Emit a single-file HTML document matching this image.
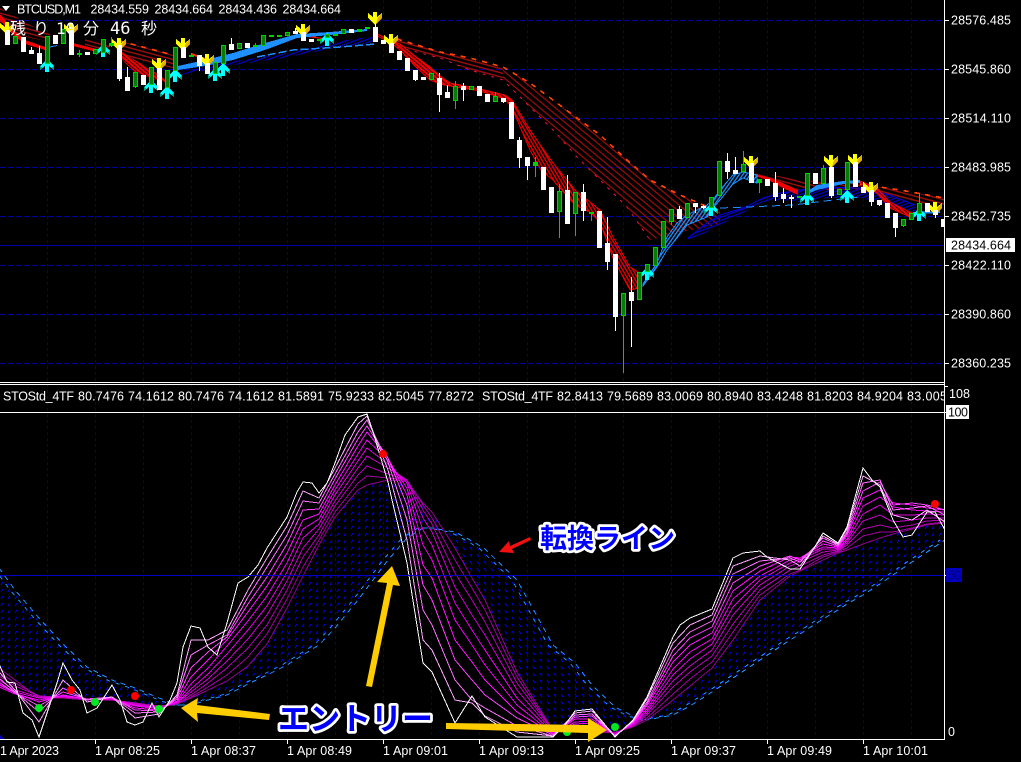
<!DOCTYPE html>
<html><head><meta charset="utf-8"><style>
html,body{margin:0;padding:0;background:#000;width:1021px;height:762px;overflow:hidden}
svg{display:block;position:absolute;left:0;top:0}
text{font-family:"Liberation Sans","DejaVu Sans",sans-serif;font-size:12.5px;fill:#fff}
.jp{font-family:"Liberation Sans","Noto Sans CJK JP",sans-serif;font-weight:700;fill:#0000ff;stroke:#fff;stroke-width:5.5px;stroke-linejoin:round;paint-order:stroke fill}
.t{font-family:"Liberation Sans","Noto Sans CJK JP",sans-serif;font-size:16px;fill:#fff}
.m{font-family:"DejaVu Sans Mono","Liberation Mono",monospace;font-size:16px;fill:#fff}
polyline{fill:none}
</style></head><body>
<svg width="1021" height="762" viewBox="0 0 1021 762" xmlns="http://www.w3.org/2000/svg">
<defs>
<clipPath id="a"><rect x="0" y="0" width="944" height="382"/></clipPath>
<clipPath id="b"><rect x="0" y="413" width="944" height="326"/></clipPath>
<clipPath id="l"><rect x="0" y="385" width="944" height="27"/></clipPath>
<g id="yd"><polygon points="-2,0 2,0 2,5 7,1 7,6 0,13 -7,6 -7,1 -2,5" fill="#ffff00"/><polygon points="3,5 7,1 7,6 1,12" fill="#e0b000"/></g>
<g id="cu"><polygon points="0,0 7,7 7,11 2,7 2,13 -2,13 -2,7 -7,11 -7,7" fill="#00ffff"/><polygon points="7,7 7,11 4,9" fill="#00a080"/><polygon points="-7,7 -7,11 -4,9" fill="#00a080"/></g>
<pattern id="sr15" width="10" height="4" patternUnits="userSpaceOnUse" patternTransform="rotate(15)"><rect width="10" height="1.4" fill="#a00c0c"/></pattern>
<pattern id="sr40" width="10" height="5" patternUnits="userSpaceOnUse" patternTransform="rotate(40)"><rect width="10" height="1.2" fill="#a00c0c"/></pattern>
<pattern id="fr40" width="10" height="3" patternUnits="userSpaceOnUse" patternTransform="rotate(40)"><rect width="10" height="2.2" fill="#f00000"/></pattern>
<pattern id="fr60" width="10" height="3" patternUnits="userSpaceOnUse" patternTransform="rotate(60)"><rect width="10" height="1.4" fill="#e80000"/></pattern>
<pattern id="fb60" width="10" height="3" patternUnits="userSpaceOnUse" patternTransform="rotate(-55)"><rect width="10" height="1.3" fill="#1e90ff"/></pattern>
<pattern id="db20" width="10" height="3" patternUnits="userSpaceOnUse" patternTransform="rotate(-20)"><rect width="10" height="1.2" fill="#0000d0"/></pattern>
<pattern id="dotr" width="7" height="7" patternUnits="userSpaceOnUse"><path d="M1 4L3 1" stroke="#0000ff" stroke-width="1" fill="none"/></pattern>
<pattern id="dotf" width="7" height="7" patternUnits="userSpaceOnUse"><path d="M1 1L3 4" stroke="#0000ff" stroke-width="1" fill="none"/></pattern>
</defs>
<rect width="1021" height="762" fill="#000"/>
<g shape-rendering="crispEdges" fill="none">
<path stroke="#0000a0" stroke-dasharray="5 3" d="M0 20.5H944M0 69.5H944M0 118.5H944M0 167.5H944M0 216.5H944M0 265.5H944M0 314.5H944M0 363.5H944"/>
<path stroke="#0000a8" d="M0 245.5H944"/>
<path stroke="#00008c" stroke-dasharray="3 3" d="M47.5 0V739M95.5 0V739M143.5 0V739M191.5 0V739M239.5 0V739M287.5 0V739M335.5 0V739M383.5 0V739M431.5 0V739M479.5 0V739M527.5 0V739M575.5 0V739M623.5 0V739M671.5 0V739M719.5 0V739M767.5 0V739M815.5 0V739M863.5 0V739M911.5 0V739"/>
</g>
<g clip-path="url(#a)" shape-rendering="crispEdges">
<path fill="url(#sr15)" d="M0 8L30 25 50 34 50 42 30 38 0 28Z"/>
<path fill="url(#sr15)" d="M85 38L110 45 110 52 85 48Z"/>
<path fill="url(#sr15)" d="M120 41L173 55 173 68 120 58Z"/>
<path fill="url(#sr15)" d="M397 39L440 52 470 58 503 67 503 80 470 70 440 58 397 47Z"/>
<path fill="url(#sr40)" d="M503 67L530 83 553 100 577 118 600 135 627 160 650 180 680 195 720 212 720 225 680 232 650 240 627 207 600 180 577 157 553 130 530 107 503 80Z"/>
<path fill="url(#sr15)" d="M755 172L800 180 860 184 900 190 944 198 944 206 900 200 860 190 800 190 755 176Z"/>
<path fill="none" stroke="#ff4500" stroke-width="1.6" stroke-dasharray="5 6" d="M397 39L440 52 470 58 503 67 530 83 553 100 577 118 600 135 627 160 650 180 680 195 720 212M120 41L173 55M860 184L900 190 944 198"/>
<path fill="none" stroke="#dc143c" stroke-dasharray="3 6" d="M397 47L440 58 470 70 503 80 530 107 553 130 577 157 600 180 627 207 650 240"/>
<path fill="url(#db20)" d="M175 74L227 62 283 54 340 41 376 36 376 42 340 47 283 58 227 66 175 76Z"/>
<path fill="url(#db20)" d="M688 238L707 223 720 215 743 208 763 198 780 193 800 190 827 187 860 188 890 195 915 205 915 212 890 205 860 198 827 198 800 202 780 200 763 202 743 213 720 225 707 232 688 240Z"/>
<path fill="none" stroke="#0000e0" d="M688 238L707 223 720 215 743 208 763 198 780 193 800 190 827 187 860 188 890 195 915 205"/>
<path fill="none" stroke="#1e90ff" stroke-width="1.5" stroke-dasharray="8 3" d="M257 57L293 50 340 47 376 44"/>
<path fill="none" stroke="#1e90ff" stroke-dasharray="8 5" d="M720 208L747 207 793 205 833 200 860 197"/>
<path fill="#f00000" d="M0 14L12 28 25 40 45 47 45 50 25 44 12 34 0 20Z"/>
<path fill="#f00000" d="M73 43L97 49 97 52 73 46Z"/>
<path fill="url(#fr40)" d="M122 52L135 60 153 71 165 79 165 82 153 79 135 72 122 60Z"/>
<path fill="#ff3000" d="M192 53L205 58 205 60 192 55Z"/>
<path fill="#f00000" d="M307 35L322 38 322 39 307 37Z"/>
<path fill="url(#fr40)" stroke="#f00000" d="M375 33L391 40 400 44 415 56 430 67 440 76 450 83 480 89 505 95 512 100 512 108 505 99 480 91 450 86 440 84 430 80 415 66 400 50 391 43 375 35Z"/>
<path fill="url(#fr60)" stroke="#f00000" d="M512 100L530 130 541 146 553 163 575 190 590 202 600 210 613 237 630 267 638 272 638 288 630 290 613 258 600 222 590 212 575 205 553 180 541 170 530 150 512 108Z"/>
<path fill="#f00000" d="M755 174L770 178 783 183 798 190 798 195 783 188 770 181 755 176Z"/>
<path fill="url(#fr40)" stroke="#f00000" d="M860 181L877 188 890 202 910 212 915 214 915 216 910 217 890 208 877 193 860 183Z"/>
<path fill="#1e90ff" d="M47 47L57 45 57 46 47 48Z"/>
<path fill="#1e90ff" d="M178 66L205 60 233 53 265 43 297 34 330 32 367 29 367 31 330 35 297 38 265 50 233 60 205 66 178 70Z"/>
<path fill="url(#fb60)" stroke="#1e90ff" d="M643 284L657 263 667 237 677 223 687 215 697 210 707 205 713 200 720 190 733 175 743 172 757 175 757 183 743 178 733 184 720 200 713 208 707 217 697 221 687 225 677 238 667 250 657 267 643 286Z"/>
<path fill="#1e90ff" d="M805 193L817 185 843 181 860 180 860 183 843 184 817 190 805 195Z"/>
<path fill="#1e90ff" d="M913 212L940 211 940 213 913 214Z"/>
<use href="#yd" x="7" y="22"/><use href="#yd" x="71" y="23"/><use href="#yd" x="119" y="38"/><use href="#yd" x="159" y="58"/><use href="#yd" x="183" y="38"/><use href="#yd" x="207" y="54"/><use href="#yd" x="303" y="24"/><use href="#yd" x="375" y="12"/><use href="#yd" x="391" y="34"/><use href="#yd" x="751" y="156"/><use href="#yd" x="831" y="155"/><use href="#yd" x="855" y="154"/><use href="#yd" x="871" y="182"/><use href="#yd" x="935" y="202"/>
<use href="#cu" x="47" y="59"/><use href="#cu" x="103" y="44"/><use href="#cu" x="151" y="80"/><use href="#cu" x="167" y="86"/><use href="#cu" x="175" y="69"/><use href="#cu" x="215" y="68"/><use href="#cu" x="223" y="63"/><use href="#cu" x="327" y="33"/><use href="#cu" x="647" y="267"/><use href="#cu" x="711" y="203"/><use href="#cu" x="807" y="192"/><use href="#cu" x="847" y="190"/><use href="#cu" x="919" y="208"/>
<path fill="none" stroke="#fff" d="M31.5 47V50M39.5 46V53M119.5 78V81M127.5 67V77M199.5 65V71M231.5 38V44M295.5 28V31M375.5 23V27M415.5 79V81M439.5 73V112M447.5 85V92M463.5 83V101M503.5 101V103M519.5 137V168M527.5 165V180M567.5 175V190M583.5 184V221M607.5 217V270M615.5 316V331M631.5 277V347M679.5 206V209M695.5 206V213M703.5 205V209M727.5 153V179M735.5 157V170M775.5 172V201M783.5 188V203M791.5 195V208M831.5 195V198M863.5 182V187M871.5 201V206M879.5 204V206M895.5 227V237M935.5 214V218"/>
<path fill="none" stroke="#00d000" d="M79.5 50V57M111.5 37V47M135.5 87V88M191.5 53V57M255.5 43V47M335.5 32V36M455.5 81V109M495.5 92V96M535.5 157V177M559.5 184V238M575.5 214V236M591.5 214V221M623.5 293V373M671.5 222V225M743.5 151V164M759.5 183V193M823.5 165V168M903.5 226V227M919.5 193V203"/>
<path fill="#fff" d="M5 30h5v15h-5zM21 37h5v15h-5zM29 50h5v4h-5zM37 53h5v11h-5zM53 35h5v9h-5zM69 30h5v25h-5zM85 52h5v3h-5zM117 45h5v34h-5zM125 77h5v14h-5zM141 75h5v10h-5zM157 68h5v22h-5zM181 47h5v11h-5zM197 55h5v11h-5zM205 63h5v11h-5zM229 44h5v6h-5zM245 43h5v5h-5zM293 31h5v3h-5zM301 32h5v9h-5zM309 39h5v3h-5zM349 29h5v4h-5zM373 27h5v15h-5zM381 40h5v4h-5zM389 43h5v10h-5zM397 51h5v9h-5zM405 58h5v13h-5zM413 70h5v10h-5zM421 77h5v3h-5zM437 78h5v17h-5zM445 92h5v6h-5zM461 86h5v4h-5zM477 86h5v10h-5zM485 94h5v8h-5zM501 98h5v4h-5zM509 102h5v37h-5zM517 140h5v18h-5zM525 157h5v9h-5zM541 167h5v23h-5zM549 187h5v26h-5zM565 190h5v34h-5zM581 192h5v19h-5zM597 211h5v37h-5zM605 243h5v19h-5zM613 254h5v63h-5zM629 292h5v9h-5zM677 209h5v10h-5zM693 203h5v4h-5zM701 206h5v2h-5zM725 161h5v11h-5zM733 170h5v4h-5zM749 163h5v20h-5zM765 179h5v7h-5zM773 183h5v14h-5zM781 194h5v5h-5zM789 197h5v2h-5zM813 173h5v11h-5zM829 167h5v29h-5zM853 162h5v25h-5zM861 187h5v6h-5zM869 190h5v12h-5zM877 200h5v5h-5zM885 203h5v15h-5zM893 213h5v15h-5zM925 203h5v9h-5zM933 210h5v5h-5zM941 219h5v8h-5z"/>
<path fill="#00d000" d="M13 36h5v8h-5zM45 36h5v28h-5zM61 29h5v15h-5zM93 49h5v5h-5zM101 39h5v14h-5zM133 72h5v15h-5zM149 67h5v18h-5zM165 70h5v18h-5zM173 47h5v24h-5zM213 62h5v12h-5zM221 45h5v19h-5zM237 43h5v6h-5zM261 35h5v11h-5zM285 32h5v4h-5zM317 39h5v2h-5zM325 34h5v4h-5zM341 29h5v5h-5zM429 73h5v7h-5zM453 86h5v15h-5zM469 86h5v4h-5zM493 96h5v6h-5zM557 191h5v21h-5zM573 192h5v22h-5zM621 293h5v23h-5zM637 272h5v28h-5zM645 264h5v8h-5zM653 247h5v19h-5zM661 221h5v27h-5zM669 209h5v13h-5zM685 203h5v15h-5zM709 197h5v11h-5zM717 161h5v35h-5zM741 164h5v8h-5zM805 173h5v23h-5zM821 168h5v16h-5zM837 189h5v6h-5zM845 162h5v28h-5zM901 219h5v7h-5zM909 213h5v7h-5zM917 203h5v11h-5zM77 53h5v2h-5zM109 43h5v3h-5zM189 55h5v2h-5zM253 45h5v2h-5zM269 35h5v2h-5zM277 35h5v2h-5zM333 34h5v2h-5zM357 29h5v3h-5zM365 27h5v2h-5zM533 162h5v4h-5zM589 212h5v2h-5zM757 179h5v4h-5zM797 196h5v2h-5z"/>
<path fill="#008000" d="M14 37h3v6h-3zM46 37h3v26h-3zM62 30h3v13h-3zM94 50h3v3h-3zM102 40h3v12h-3zM134 73h3v13h-3zM150 68h3v16h-3zM166 71h3v16h-3zM174 48h3v22h-3zM214 63h3v10h-3zM222 46h3v17h-3zM238 44h3v4h-3zM262 36h3v9h-3zM286 33h3v2h-3zM326 35h3v2h-3zM342 30h3v3h-3zM430 74h3v5h-3zM454 87h3v13h-3zM470 87h3v2h-3zM494 97h3v4h-3zM558 192h3v19h-3zM574 193h3v20h-3zM622 294h3v21h-3zM638 273h3v26h-3zM646 265h3v6h-3zM654 248h3v17h-3zM662 222h3v25h-3zM670 210h3v11h-3zM686 204h3v13h-3zM710 198h3v9h-3zM718 162h3v33h-3zM742 165h3v6h-3zM806 174h3v21h-3zM822 169h3v14h-3zM838 190h3v4h-3zM846 163h3v26h-3zM902 220h3v5h-3zM910 214h3v5h-3zM918 204h3v9h-3z"/>
</g>
<g clip-path="url(#b)" shape-rendering="crispEdges">
<path fill="url(#dotr)" d="M-1 668L15 680 39 698 63 698 87 700 112 700 135 703 159 706 177 704 191 698 208 690 227 681 248 666 267 644 287 608 303 576 319 545 335 517 358 490 367 485 388 480 388 560 367 588 358 600 335 628 319 645 303 655 287 665 267 675 248 684 227 695 208 700 191 705 177 705 159 698 135 688 112 680 87 667 63 644 39 618 15 590 -1 568Z"/>
<path fill="url(#dotf)" d="M388 480L407 481 423 503 432 512 455 548 472 578 485 600 517 672 553 730 575 732 592 733 615 732 633 727 647 720 633 716 615 707 592 685 575 663 553 645 517 580 485 549 472 541 455 532 432 528 423 528 407 538 388 560Z"/>
<path fill="url(#dotr)" d="M647 720L673 700 690 686 712 668 733 640 760 600 790 576 800 571 823 560 838 553 847 550 863 544 880 538 893 534 912 529 927 525 945 523 945 540 927 552 912 562 893 575 880 584 863 595 847 604 838 610 823 619 800 634 790 640 760 660 733 678 712 692 690 706 673 715 647 720Z"/>
<g fill="none" stroke="#1e90ff">
<path stroke-dasharray="5 5" d="M-1 568L15 590 39 618 63 644 87 667 112 680 135 688 159 698 177 705 191 705 208 700 227 695 248 684 267 675 287 665 303 655 319 645 335 628 358 600 367 588 388 560 407 538 423 528 432 528 455 532 472 541 485 549 517 580 553 645 575 663 592 685 615 707 633 716 647 720 673 715 690 706 712 692 733 678 760 660 790 640 800 634 823 619 838 610 847 604 863 595 880 584 893 575 912 562 927 552 945 540"/>
<path transform="translate(-5,0)" stroke-dasharray="4 6" d="M-1 568L15 590 39 618 63 644 87 667 112 680 135 688 159 698 177 705 191 705 208 700 227 695 248 684 267 675 287 665 303 655 319 645 335 628 358 600 367 588 388 560 407 538 423 528 432 528 455 532 472 541 485 549 517 580 553 645 575 663 592 685 615 707 633 716 647 720 673 715 690 706 712 692 733 678 760 660 790 640 800 634 823 619 838 610 847 604 863 595 880 584 893 575 912 562 927 552 945 540"/>
</g>
<polyline stroke="#900090" points="-1,668 15,680 39,698 63,698 87,700 112,700 135,703 159,706 177,704 191,698 208,690 227,681 248,666 267,644 287,608 303,576 319,545 335,517 358,490 367,485 388,480 407,481 423,503 432,512 455,548 472,578 485,600 517,672 553,730 575,732 592,733 615,732 633,727 647,720 673,700 690,686 712,668 733,640 760,600 790,576 800,571 823,560 838,553 847,550 863,544 880,538 893,534 912,529 927,525 945,523"/>
<polyline stroke="#a000a0" points="-1,672 15,683 39,696 63,698 87,700 112,700 135,703 159,706 177,704 191,697 208,687 227,675 248,657 267,634 287,599 303,567 319,540 335,512 358,483 367,476 388,478 407,480 423,505 432,518 455,560 472,588 485,610 517,677 553,731 575,730 592,731 615,733 633,726 647,718 673,694 690,679 712,662 733,632 760,595 790,574 800,570 823,557 838,552 847,548 863,536 880,532 893,532 912,528 927,524 945,522"/>
<polyline stroke="#b400b4" points="-1,676 15,686 39,696 63,697 87,699 112,700 135,703 159,707 177,704 191,695 208,683 227,668 248,648 267,625 287,590 303,557 319,535 335,506 358,475 367,466 388,474 407,480 423,510 432,524 455,573 472,600 485,622 517,683 553,731 575,728 592,728 615,733 633,726 647,715 673,687 690,672 712,656 733,624 760,590 790,570 800,566 823,555 838,551 847,545 863,529 880,525 893,528 912,525 927,521 945,520"/>
<polyline stroke="#cc00cc" points="-1,680 15,690 39,697 63,697 87,699 112,700 135,704 159,707 177,703 191,692 208,679 227,661 248,639 267,615 287,581 303,548 319,529 335,501 358,468 367,456 388,468 407,480 423,518 432,532 455,587 472,615 485,635 517,690 553,732 575,726 592,726 615,734 633,725 647,713 673,681 690,666 712,650 733,615 760,585 790,566 800,562 823,552 838,550 847,543 863,521 880,515 893,522 912,520 927,518 945,518"/>
<polyline stroke="#e000e0" points="-1,684 15,692 39,698 63,697 87,699 112,699 135,705 159,708 177,703 191,689 208,674 227,654 248,630 267,606 287,572 303,538 319,524 335,495 358,461 367,448 388,464 407,483 423,530 432,545 455,603 472,630 485,650 517,698 553,733 575,724 592,723 615,734 633,724 647,711 673,675 690,659 712,644 733,607 760,580 790,563 800,560 823,549 838,549 847,541 863,514 880,505 893,515 912,515 927,514 945,515"/>
<polyline stroke="#f000f0" points="-1,687 15,694 39,700 63,696 87,699 112,699 135,706 159,709 177,702 191,684 208,668 227,646 248,621 267,596 287,563 303,529 319,519 335,490 358,454 367,440 388,460 407,488 423,545 432,560 455,620 472,645 485,665 517,705 553,734 575,722 592,721 615,735 633,724 647,709 673,669 690,652 712,639 733,599 760,576 790,560 800,558 823,547 838,548 847,539 863,506 880,497 893,507 912,510 927,511 945,512"/>
<polyline stroke="#ff10ff" points="-1,685 15,693 39,702 63,695 87,699 112,698 135,708 159,710 177,701 191,677 208,660 227,640 248,612 267,586 287,553 303,520 319,514 335,485 358,446 367,432 388,458 407,495 423,565 432,578 455,640 472,662 485,680 517,712 553,734 575,719 592,719 615,735 633,723 647,706 673,662 690,645 712,633 733,591 760,571 790,557 800,558 823,544 838,547 847,536 863,498 880,490 893,503 912,505 927,508 945,510"/>
<polyline stroke="#ff40ff" points="-1,682 15,693 39,706 63,692 87,699 112,697 135,710 159,711 177,699 191,668 208,652 227,637 248,604 267,577 287,544 303,510 319,509 335,479 358,439 367,426 388,458 407,505 423,585 432,600 455,660 472,680 485,695 517,718 553,735 575,717 592,716 615,736 633,722 647,704 673,656 690,638 712,627 733,583 760,566 790,556 800,560 823,541 838,546 847,534 863,491 880,482 893,505 912,503 927,505 945,510"/>
<polyline stroke="#ff70ff" points="-1,678 15,692 39,712 63,688 87,700 112,697 135,713 159,712 177,697 191,655 208,645 227,635 248,597 267,567 287,535 303,501 319,503 335,474 358,432 367,420 388,462 407,520 423,610 432,625 455,680 472,700 485,708 517,726 553,736 575,715 592,714 615,736 633,721 647,702 673,650 690,632 712,621 733,574 760,561 790,558 800,562 823,538 838,545 847,532 863,483 880,480 893,510 912,508 927,506 945,515"/>
<polyline stroke="#ffa8ff" points="-1,672 15,690 39,722 63,680 87,702 112,697 135,718 159,714 177,695 191,640 208,640 227,630 248,590 267,558 287,526 303,491 319,498 335,468 358,424 367,416 388,470 407,540 423,640 432,650 455,700 472,703 485,716 517,732 553,736 575,713 592,711 615,736 633,721 647,699 673,643 690,625 712,615 733,566 760,556 790,560 800,566 823,536 838,544 847,529 863,476 880,485 893,515 912,520 927,510 945,522"/>
<path fill="none" stroke="#fff" d="M-1 664L7 682 15 683 23 713 32 720 39 737 48 710 57 683 63 663 72 680 80 690 87 713 97 708 112 685 120 700 127 722 135 725 143 722 152 703 159 717 170 700 177 683 183 647 191 626 200 628 208 647 217 655 227 623 238 583 248 577 258 565 267 548 287 517 297 492 303 482 312 483 319 493 327 483 335 463 345 435 358 417 367 414 373 432 388 482 392 500 407 563 423 663 432 672 455 723 472 696 485 717 517 737 553 737 565 725 575 711 592 709 615 737 633 720 647 697 673 637 680 625 690 618 712 609 733 558 743 553 760 551 767 557 790 569 800 569 813 550 823 533 838 543 847 527 863 468 872 480 880 487 893 520 903 537 912 535 927 512 935 512 945 530"/>
<g shape-rendering="auto"><circle cx="71" cy="690" r="4" fill="#f00"/><circle cx="135" cy="696" r="4" fill="#f00"/><circle cx="383" cy="454" r="4" fill="#f00"/><circle cx="935" cy="504" r="4" fill="#f00"/><circle cx="39" cy="708" r="4" fill="#00e820"/><circle cx="95" cy="702" r="4" fill="#00e820"/><circle cx="159" cy="709" r="4" fill="#00e820"/><circle cx="567" cy="732" r="4" fill="#00e820"/><circle cx="615" cy="727" r="4" fill="#00e820"/></g>
<path stroke="#0000c8" d="M0 575.5H944"/>
<polygon points="0,735 4,739 0,739" fill="#0000c0"/>
</g>
<g shape-rendering="crispEdges" fill="#fff">
<rect x="0" y="382" width="945" height="1"/><rect x="0" y="384" width="945" height="1"/><rect x="0" y="412" width="945" height="1"/>
<rect x="0" y="739" width="945" height="1"/><rect x="944" y="0" width="1" height="740"/>
<rect x="945" y="20" width="4" height="1"/><rect x="945" y="69" width="4" height="1"/><rect x="945" y="118" width="4" height="1"/><rect x="945" y="167" width="4" height="1"/><rect x="945" y="216" width="4" height="1"/><rect x="945" y="265" width="4" height="1"/><rect x="945" y="314" width="4" height="1"/><rect x="945" y="363" width="4" height="1"/>
<rect x="95" y="740" width="1" height="4"/><rect x="191" y="740" width="1" height="4"/><rect x="287" y="740" width="1" height="4"/><rect x="383" y="740" width="1" height="4"/><rect x="479" y="740" width="1" height="4"/><rect x="575" y="740" width="1" height="4"/><rect x="671" y="740" width="1" height="4"/><rect x="767" y="740" width="1" height="4"/><rect x="863" y="740" width="1" height="4"/>
<rect x="945" y="386" width="3" height="1"/><rect x="945" y="412" width="3" height="1"/><rect x="945" y="575" width="3" height="1"/>
</g>
<polygon points="2,6 10,6 6,11" fill="#fff"/>
<text x="17" y="13.5" textLength="64">BTCUSD,M1</text>
<text x="90.5" y="13.5" textLength="58.5">28434.559</text>
<text x="154.5" y="13.5" textLength="58.5">28434.664</text>
<text x="218.5" y="13.5" textLength="58.5">28434.436</text>
<text x="282.5" y="13.5" textLength="58.5">28434.664</text>
<text class="t" x="10" y="34">残</text><text class="t" x="33" y="34">り</text><text class="m" x="56" y="34">10</text><text class="t" x="83" y="34">分</text><text class="m" x="110" y="34" style="font-size:17px">46</text><text class="t" x="141" y="34">秒</text>
<text x="951" y="24.5" textLength="60">28576.485</text>
<text x="951" y="73.5" textLength="60">28545.860</text>
<text x="951" y="122.5" textLength="60">28514.110</text>
<text x="951" y="171.5" textLength="60">28483.985</text>
<text x="951" y="220.5" textLength="60">28452.735</text>
<text x="951" y="269.5" textLength="60">28422.110</text>
<text x="951" y="318.5" textLength="60">28390.860</text>
<text x="951" y="367.5" textLength="60">28360.235</text>
<rect x="946" y="238" width="69" height="14" fill="#fff" shape-rendering="crispEdges"/>
<text x="951" y="249.5" textLength="60" style="fill:#000">28434.664</text>
<text x="949" y="398" textLength="21">108</text>
<rect x="946" y="405" width="23" height="14" fill="#fff" shape-rendering="crispEdges"/>
<text x="948" y="416.5" textLength="20" style="fill:#000">100</text>
<rect x="946" y="568" width="16" height="14" fill="#0000c0" shape-rendering="crispEdges"/>
<text x="948" y="579.5" textLength="13" style="fill:#000060">50</text>
<text x="948" y="736">0</text>
<g clip-path="url(#l)">
<text x="3" y="400.5" textLength="71">STOStd_4TF</text>
<text x="78" y="400.5" textLength="46">80.7476</text><text x="128" y="400.5" textLength="46">74.1612</text><text x="178" y="400.5" textLength="46">80.7476</text><text x="228" y="400.5" textLength="46">74.1612</text><text x="278" y="400.5" textLength="46">81.5891</text><text x="328" y="400.5" textLength="46">75.9233</text><text x="378" y="400.5" textLength="46">82.5045</text><text x="428" y="400.5" textLength="46">77.8272</text>
<text x="482" y="400.5" textLength="71">STOStd_4TF</text>
<text x="557" y="400.5" textLength="46">82.8413</text><text x="607" y="400.5" textLength="46">79.5689</text><text x="657" y="400.5" textLength="46">83.0069</text><text x="707" y="400.5" textLength="46">80.8940</text><text x="757" y="400.5" textLength="46">83.4248</text><text x="807" y="400.5" textLength="46">81.8203</text><text x="857" y="400.5" textLength="46">84.9204</text><text x="907" y="400.5" textLength="40">83.005</text>
</g>
<text x="0" y="755" textLength="59">1 Apr 2023</text>
<text x="95" y="755" textLength="65">1 Apr 08:25</text>
<text x="191" y="755" textLength="65">1 Apr 08:37</text>
<text x="287" y="755" textLength="65">1 Apr 08:49</text>
<text x="383" y="755" textLength="65">1 Apr 09:01</text>
<text x="479" y="755" textLength="65">1 Apr 09:13</text>
<text x="575" y="755" textLength="65">1 Apr 09:25</text>
<text x="671" y="755" textLength="65">1 Apr 09:37</text>
<text x="767" y="755" textLength="65">1 Apr 09:49</text>
<text x="863" y="755" textLength="65">1 Apr 10:01</text>
<g fill="#ffcc00">
<polygon points="181,708 198,698 197,705 270,714 269,720 197,713 198,722"/>
<polygon points="392,566 400,586 393,585 372,687 366,686 387,583 377,582"/>
<polygon points="607,730 588,718 588,725 446,723 446,729 588,733 588,742"/>
</g>
<polygon points="499,552 509,541 510,546 530,537 531,540 512,549 514,553" fill="#f01010"/>
<text class="jp" x="278" y="730" style="font-size:31px">エントリー</text>
<text class="jp" x="540" y="548" style="font-size:27px">転換ライン</text>
</svg>
</body></html>
